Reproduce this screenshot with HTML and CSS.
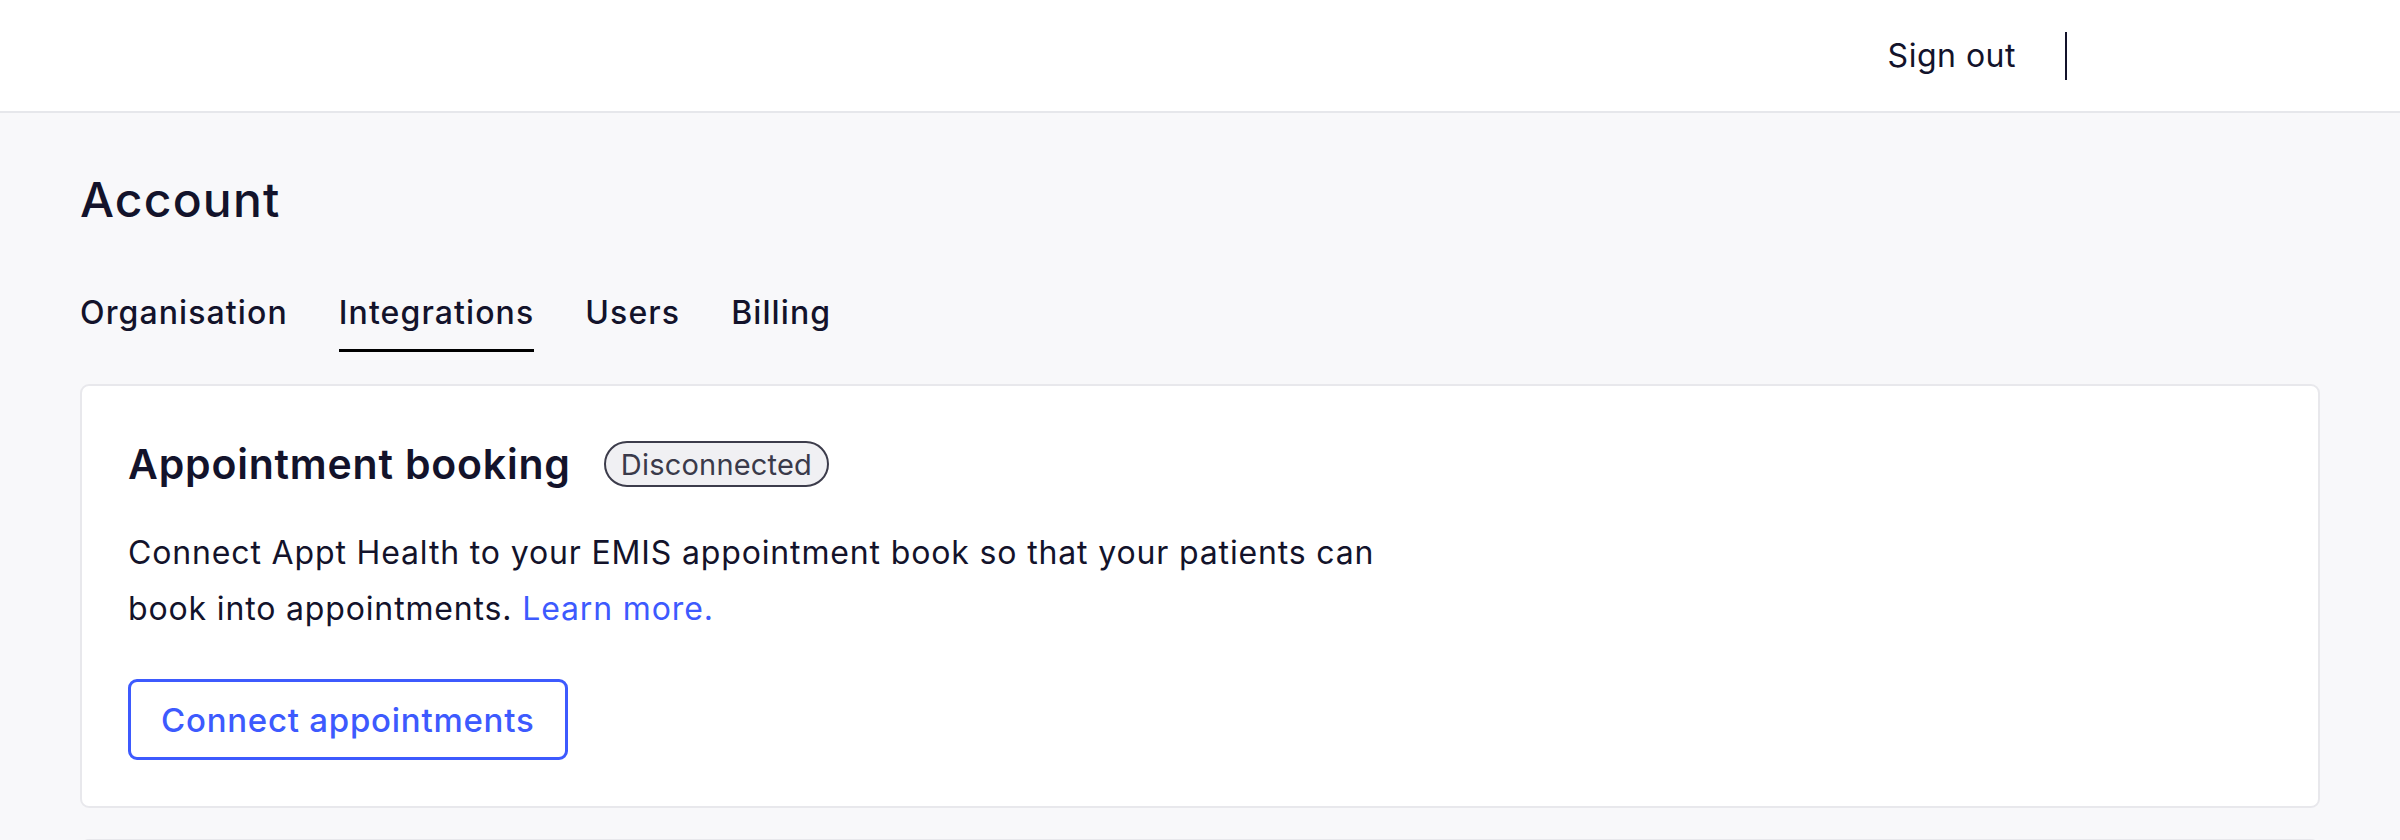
FILE: index.html
```html
<!DOCTYPE html>
<html lang="en">
<head>
<meta charset="utf-8">
<title>Account – Integrations</title>
<link rel="stylesheet" href="styles.css">
</head>
<body>
<header class="topbar">
  <a class="signout" href="#">Sign out</a>
  <span class="divider"></span>
</header>
<main class="page">
  <h1 class="page-title">Account</h1>
  <nav class="tabs">
    <a class="tab" href="#">Organisation</a>
    <a class="tab tab-active" href="#">Integrations</a>
    <a class="tab" href="#">Users</a>
    <a class="tab" href="#">Billing</a>
  </nav>
  <section class="card">
    <div class="card-head">
      <h2 class="card-title">Appointment booking</h2>
      <span class="badge">Disconnected</span>
    </div>
    <p class="card-text">Connect Appt Health to your EMIS appointment book so that your patients can book into appointments. <a class="link" href="#">Learn more.</a></p>
    <button class="btn-outline" type="button">Connect appointments</button>
  </section>
  <section class="card card-next"></section>
</main>
</body>
</html>
```
FILE: styles.css
```css
* { box-sizing: border-box; }
html, body { margin: 0; padding: 0; }
body {
  height: 100vh;
  overflow: hidden;
  background: #f8f8fa;
  color: #13132b;
  font-family: "Inter", "Open Sans", sans-serif;
}
a { text-decoration: none; color: inherit; }

.topbar {
  height: 113px;
  background: #ffffff;
  border-bottom: 2px solid #e6e7eb;
  display: flex;
  align-items: center;
  justify-content: flex-end;
  padding: 1px 333px 0 80px;
}
.signout {
  font-size: 32px;
  line-height: 48px;
  letter-spacing: 0.5px;
  color: #13132b;
  margin-right: 1px;
}
.divider {
  width: 2px;
  height: 48px;
  background: #13132b;
  margin-left: 48px;
}

.page {
  height: calc(100vh - 113px);
  overflow: hidden;
  padding: 55px 80px 0;
}
.page-title {
  margin: 0;
  font-size: 48px;
  font-weight: 500;
  line-height: 64px;
  letter-spacing: 1.2px;
}
.tabs {
  display: flex;
  gap: 51px;
  margin-top: 57px;
}
.tab {
  font-size: 32px;
  font-weight: 500;
  line-height: 48px;
  letter-spacing: 1.1px;
  padding-bottom: 12px;
  border-bottom: 3px solid transparent;
}
.tab-active { border-bottom-color: #000000; }

.card {
  margin-top: 32px;
  background: #ffffff;
  border: 2px solid #e8e8ec;
  border-radius: 9px;
  padding: 54px 46px 46px;
}
.card-head {
  display: flex;
  align-items: center;
  gap: 33px;
  height: 48px;
}
.card-title {
  margin: 0;
  font-size: 41px;
  font-weight: 600;
  line-height: 48px;
  letter-spacing: 0.8px;
}
.badge {
  display: inline-flex;
  align-items: center;
  height: 46px;
  padding: 0 15px;
  border: 2px solid #3c3c4b;
  border-radius: 999px;
  background: #f0f0f3;
  color: #3a3a4a;
  font-size: 29px;
  letter-spacing: 0.2px;
}
.card-text {
  margin: 37px 0 0;
  max-width: 1290px;
  font-size: 32px;
  line-height: 56px;
  letter-spacing: 0.85px;
}
.link { color: #3d5afe; }
.btn-outline {
  display: block;
  margin-top: 42px;
  padding: 17px 31px 15px 30px;
  background: #ffffff;
  border: 3px solid #3d5afe;
  border-radius: 9px;
  color: #3d5afe;
  font-family: inherit;
  font-size: 33px;
  font-weight: 500;
  line-height: 43px;
  letter-spacing: 0.75px;
  cursor: pointer;
}
.card-next {
  margin-top: 31px;
  height: 200px;
  padding: 0;
}
```
